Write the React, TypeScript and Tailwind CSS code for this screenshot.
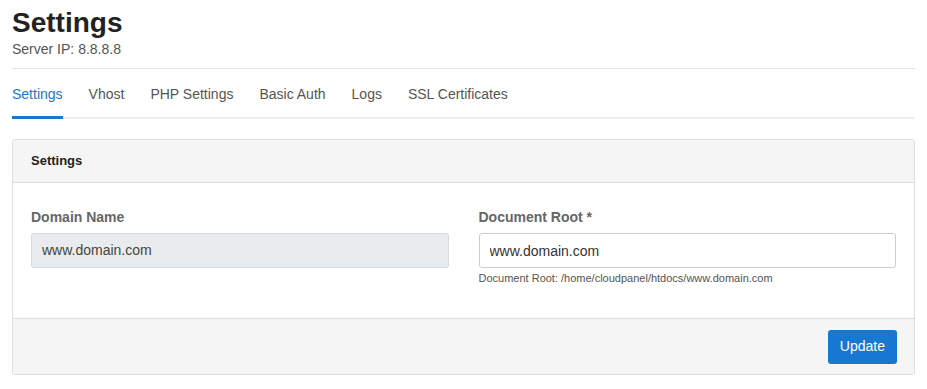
import React from 'react';

const TABS = ['Settings', 'Vhost', 'PHP Settings', 'Basic Auth', 'Logs', 'SSL Certificates'];

const App: React.FC = () => {
  return (
    <div className="min-h-screen bg-white px-3 text-[#333] font-['Liberation_Sans',Arial,sans-serif]">
      <div className="pt-[6px] pb-[11px] border-b border-[#e5e5e5]">
        <h1 className="text-[28px] font-bold leading-[34px] text-[#222]">Settings</h1>
        <p className="text-[14px] leading-[16px] mt-[1px] text-[#555]">Server IP: 8.8.8.8</p>
      </div>

      <nav className="flex gap-[26px] border-b-2 border-[#eee] mt-[11px]">
        {TABS.map((tab, i) => (
          <a
            key={tab}
            className={
              i === 0
                ? 'text-[14px] leading-[16px] pt-[6px] pb-[14px] text-[#1778d2] border-b-[3px] border-[#1778d2] -mb-[2px]'
                : 'text-[14px] leading-[16px] pt-[6px] pb-[14px] text-[#555] border-b-[3px] border-transparent -mb-[2px]'
            }
          >
            {tab}
          </a>
        ))}
      </nav>

      <div className="mt-[20px] border border-[#ddd] rounded-[3px] overflow-hidden">
        <div className="bg-[#f5f5f5] border-b border-[#ddd] px-[18px] h-[43px] flex items-center">
          <h2 className="text-[13px] font-bold text-[#222]">Settings</h2>
        </div>

        <div className="px-[18px] pt-[26px] pb-[33px] grid grid-cols-2 gap-[30px]">
          <div>
            <label className="block text-[14px] font-bold text-[#666] leading-[16px] mb-[8px]">Domain Name</label>
            <div className="h-[35px] rounded-[3px] border border-[#d6dadf] bg-[#e9ecef] px-[10px] flex items-center text-[14px] text-[#444]">
              www.domain.com
            </div>
          </div>
          <div>
            <label className="block text-[14px] font-bold text-[#666] leading-[16px] mb-[8px]">Document Root *</label>
            <input
              readOnly
              value="www.domain.com"
              className="w-full h-[35px] rounded-[3px] border border-[#ccc] bg-white px-[10px] text-[14px] text-[#333] outline-none"
            />
            <p className="text-[11px] text-[#555] mt-[4px] leading-[13px]">Document Root: /home/cloudpanel/htdocs/www.domain.com</p>
          </div>
        </div>

        <div className="bg-[#f5f5f5] border-t border-[#ddd] h-[56px] px-[17px] flex items-center justify-end">
          <button className="h-[34px] px-[12px] rounded-[3px] bg-[#1778d2] text-white text-[14px]">Update</button>
        </div>
      </div>
    </div>
  );
};

export default App;
